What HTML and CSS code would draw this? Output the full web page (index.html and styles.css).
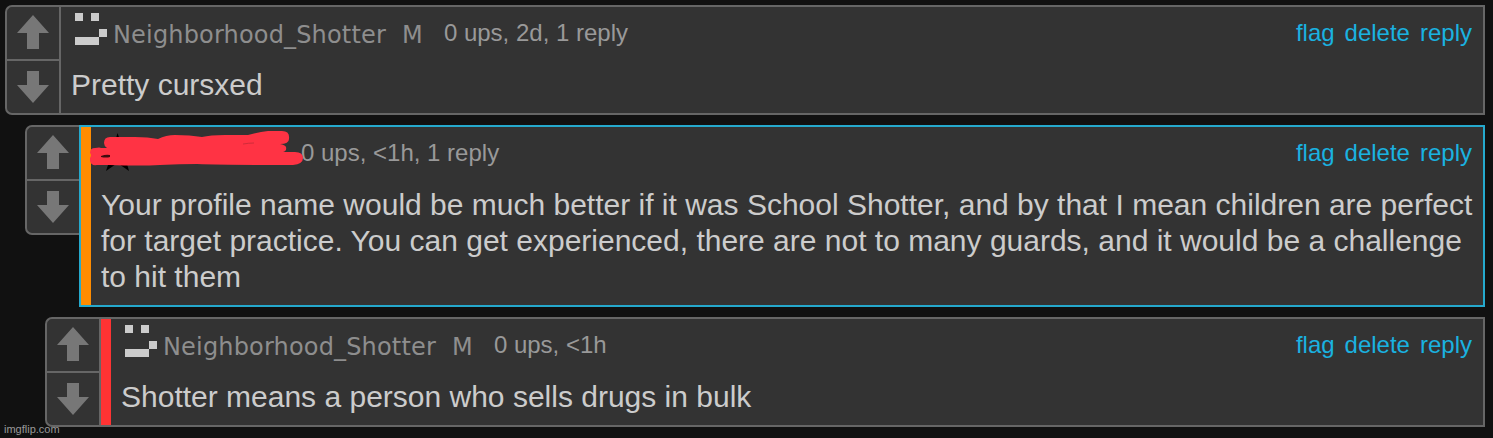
FILE: index.html
```html
<!DOCTYPE html>
<html lang="en">
  <head>
    <meta charset="UTF-8" />
    <meta name="viewport" content="width=device-width, initial-scale=1.0" />
    <title>Comments</title>
    <link rel="stylesheet" href="styles.css">
  </head>
  <body>
    <!-- shared icon shapes -->
    <svg class="defs" width="0" height="0">
      <symbol id="up" viewBox="0 0 32 34">
        <path d="M16 0 L32 18 H22 V34 H10 V18 H0 Z" />
      </symbol>
      <symbol id="down" viewBox="0 0 32 32">
        <path d="M10 0 H22 V14 H32 L16 32 L0 14 H10 Z" />
      </symbol>
      <symbol id="face" viewBox="0 0 32 32">
        <path d="M0 0h8v8H0z M16 0h8v8h-8z M24 16h8v8h-8z M0 24h24v8H0z" />
      </symbol>
    </svg>

    <div class="comments">
      <div class="comment">
        <div class="votes">
          <div class="vote"><svg class="up"><use href="#up" /></svg></div>
          <div class="vote"><svg class="down"><use href="#down" /></svg></div>
        </div>
        <div class="box">
          <div class="header">
            <svg class="face"><use href="#face" /></svg>
            <span class="user">Neighborhood_Shotter</span>
            <span class="rank">M</span>
            <span class="info">0 ups, 2d, 1 reply</span>
            <div class="actions"><a>flag</a><a>delete</a><a>reply</a></div>
          </div>
          <p class="text">Pretty cursxed</p>
        </div>
      </div>

      <div class="comment level-1">
        <div class="votes">
          <div class="vote"><svg class="up"><use href="#up" /></svg></div>
          <div class="vote"><svg class="down"><use href="#down" /></svg></div>
        </div>
        <div class="box selected">
          <div class="bar orange"></div>
          <div class="header">
            <span class="info">0 ups, &lt;1h, 1 reply</span>
            <div class="actions"><a>flag</a><a>delete</a><a>reply</a></div>
          </div>
          <p class="text">Your profile name would be much better if it was School Shotter, and by that I mean children are perfect<br>for target practice. You can get experienced, there are not to many guards, and it would be a challenge<br>to hit them</p>
          <svg class="scribble" viewBox="0 0 220 50">
            <path fill="#000" d="M27.5 7 L32 20 L39 45 L27.5 37 L16 45 L22 27 Z" />
            <path fill="#ff3344" d="M20 11 Q14 11 14 17 Q14 20 17 22 L11 22 Q10 21 5 22 Q0 22 0 27 Q2 29 0 32 V35 Q1 40 7 39 L20 39 Q50 40 70 39 Q90 38 107 38 Q135 39 203 39 Q213 38 213 32 Q213 26 205 26 L193 26 Q197 25 196 21 Q195 19 190 18 Q199 18 199 13 Q200 5 192 5 H178 Q168 6 158 9 L135 9 Q120 9 112 11 Q100 9 85 9 Q76 9 68 13 Q58 11 45 11 Z" />
            <path fill="#400c10" d="M11 30 Q16 28 20 29 V31 Q16 32 11 31 Z" />
            <path class="crease" d="M153 18 Q159 17 164 17" />
          </svg>
        </div>
      </div>

      <div class="comment level-2">
        <div class="votes">
          <div class="vote"><svg class="up"><use href="#up" /></svg></div>
          <div class="vote"><svg class="down"><use href="#down" /></svg></div>
        </div>
        <div class="box">
          <div class="bar red"></div>
          <div class="header">
            <svg class="face"><use href="#face" /></svg>
            <span class="user">Neighborhood_Shotter</span>
            <span class="rank">M</span>
            <span class="info">0 ups, &lt;1h</span>
            <div class="actions"><a>flag</a><a>delete</a><a>reply</a></div>
          </div>
          <p class="text">Shotter means a person who sells drugs in bulk</p>
        </div>
      </div>
    </div>
    <div class="watermark">imgflip.com</div>
  </body>
</html>
```
FILE: styles.css
```css
* {
  margin: 0;
  padding: 0;
  box-sizing: border-box;
}

body {
  font-family: "Liberation Sans", Arial, sans-serif;
  background-color: #111;
  color: #ccc;
  height: 438px;
  overflow: hidden;
}

.defs {
  position: absolute;
}

.comments {
  display: flex;
  flex-direction: column;
  gap: 10px;
  padding: 5px 8px 0 5px;
}

.comment {
  display: flex;
  align-items: flex-start;
}

.level-1 {
  margin-left: 20px;
}

.level-2 {
  margin-left: 40px;
}

.votes {
  width: 54px;
  height: 110px;
  flex-shrink: 0;
  background-color: #333;
  border: 2px solid #666;
  border-right: none;
  border-radius: 7px 0 0 7px;
}

.vote {
  height: 52px;
  padding-top: 8px;
}

.vote + .vote {
  height: 54px;
  padding-top: 10px;
  border-top: 2px solid #666;
}

.vote svg {
  display: block;
  margin: 0 auto;
  width: 32px;
  height: 34px;
  fill: #777;
}

.vote .down {
  height: 32px;
}

.box {
  position: relative;
  flex: 1;
  display: grid;
  grid-template-columns: auto 1fr;
  background-color: #333;
  border: 2px solid #666;
}

.selected {
  border-color: #25a9cd;
}

.bar {
  width: 10px;
  grid-row: 1 / 3;
}

.orange {
  background-color: #ff8c00;
}

.red {
  background-color: #ff3333;
}

.header {
  grid-column: 2;
  display: flex;
  align-items: flex-start;
  height: 60px;
  padding: 6px 11px 0 14px;
  font-size: 24px;
  line-height: 28px;
  color: #999;
  white-space: nowrap;
}

.face {
  width: 32px;
  height: 32px;
  margin-right: 6px;
  fill: #ccc;
}

.user,
.rank {
  font-family: "DejaVu Sans", Verdana, sans-serif;
  letter-spacing: 0.17px;
  color: #8e8e8e;
  margin-top: 8px;
}

.rank {
  margin-left: 16px;
}

.info {
  margin: 6px 0 0 21px;
}

.selected .info {
  margin-left: 196px;
}

.actions {
  display: flex;
  gap: 10px;
  margin: 6px 0 0 auto;
  color: #1ab2e0;
}

.text {
  grid-column: 2;
  padding: 0 0 10px 10px;
  font-size: 30px;
  line-height: 36px;
  white-space: nowrap;
}

/* marker strokes over the user name */
.scribble {
  position: absolute;
  left: 9px;
  top: -1px;
  width: 220px;
  height: 50px;
}

.crease {
  fill: none;
  stroke: #d02c3a;
}

.watermark {
  position: absolute;
  left: 4px;
  bottom: 2px;
  font-size: 11px;
  line-height: 13px;
  color: #999;
}
```
